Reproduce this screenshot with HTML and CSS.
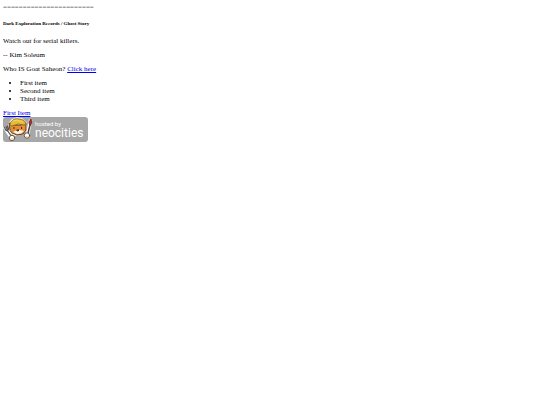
FILE: index.html
```html
<!DOCTYPE html>
<html lang="en">
<head>
<meta charset="utf-8">
<title>Dark Exploration Records</title>
<link rel="stylesheet" href="styles.css">
</head>
<body>
<div class="rule">=======================</div>
<h6 class="title">Dark Exploration Records / Ghost Story</h6>
<p>Watch out for serial killers.</p>
<p>-- Kim Soleum</p>
<p>Who IS Goat Saheon? <a href="#who">Click here</a></p>
<ul>
<li>First item</li>
<li>Second item</li>
<li>Third item</li>
</ul>
<div><a href="#first">First Item</a></div>
<a class="badge" href="#neocities" aria-label="hosted by neocities">
<svg viewBox="0 0 85 25" width="85" height="25">
<rect width="85" height="25" rx="3" fill="#a7a7a7"/>
<g stroke-linecap="round" stroke-linejoin="round">
<path d="M2 11l2 3 4 6M24.500 17L27.500 4" stroke="#fff" stroke-width="3.500" fill="none"/>
<path d="M7 15L6 7l3-4 5-2 5 1 4 4v7l-4 4-7 1z" fill="#fff" stroke="#fff" stroke-width="1.600"/>
<path d="M7 13L6 6l4 2h8l5-2v7l-3 4-6 1-5-2z" fill="#e58d32" stroke="#4c3218" stroke-width=".9"/>
<path d="M7 7c1-4 5-6 9-5 4 0 6 2 7 5l-2 1-6-1-6 2z" fill="#e8bd36" stroke="#80611b" stroke-width=".8"/>
<path d="M10 4l4-1 5 2" fill="none" stroke="#f8dd72" stroke-width=".8"/>
<path d="M10 15l4-2h3l4 1-3 2.500-4 .500z" fill="#fff6e9"/>
<path d="M11 10.500v1M18.500 10.500v1M14 13h2l-1 1z" fill="#332417" stroke="#332417" stroke-width="1"/>
<path d="M1.500 10l1 3 2 1 1-2-1-3M3 9.500l1.500 4 4 6" fill="none" stroke="#4e4e4e" stroke-width="1.200"/>
<path d="M25 16l2-8" stroke="#574038" stroke-width="1.500"/>
<path d="M26.500 7.500L26 5l2-3 .800 3-1 3z" fill="#aa302c" stroke="#601f1b" stroke-width=".8"/>
<circle cx="9" cy="21" r="2.700" fill="#fff" stroke="#5b4a35" stroke-width=".9"/>
<circle cx="24" cy="18.500" r="2.700" fill="#fff" stroke="#5b4a35" stroke-width=".9"/>
<path d="M8 22h2M23 20h2" fill="none" stroke="#edb66f" stroke-width="1"/>
</g>
<text class="badge-small" x="32" y="9">hosted by</text>
<text class="badge-name" x="32" y="20">neocities</text>
</svg>
</a>
</body>
</html>
```
FILE: styles.css
```css
body {
  margin: 3px;
  background: #fff;
  color: #000;
  font: 7px/8px "Liberation Serif", "Times New Roman", serif;
}

.rule {
  color: #555;
}

.title {
  margin: 10px 0;
  font-size: 5px;
  line-height: 6px;
}

p {
  margin: 6px 0;
}

ul {
  margin: 6px 0;
  padding-left: 17px;
}

a {
  color: #0000ee;
}

.badge {
  display: block;
  width: 85px;
}

.badge svg {
  display: block;
}

.badge text {
  fill: #fff;
  font-family: Roboto, "Noto Sans", sans-serif;
}

.badge .badge-small {
  font-size: 6px;
}

.badge .badge-name {
  font-size: 12px;
}
```
